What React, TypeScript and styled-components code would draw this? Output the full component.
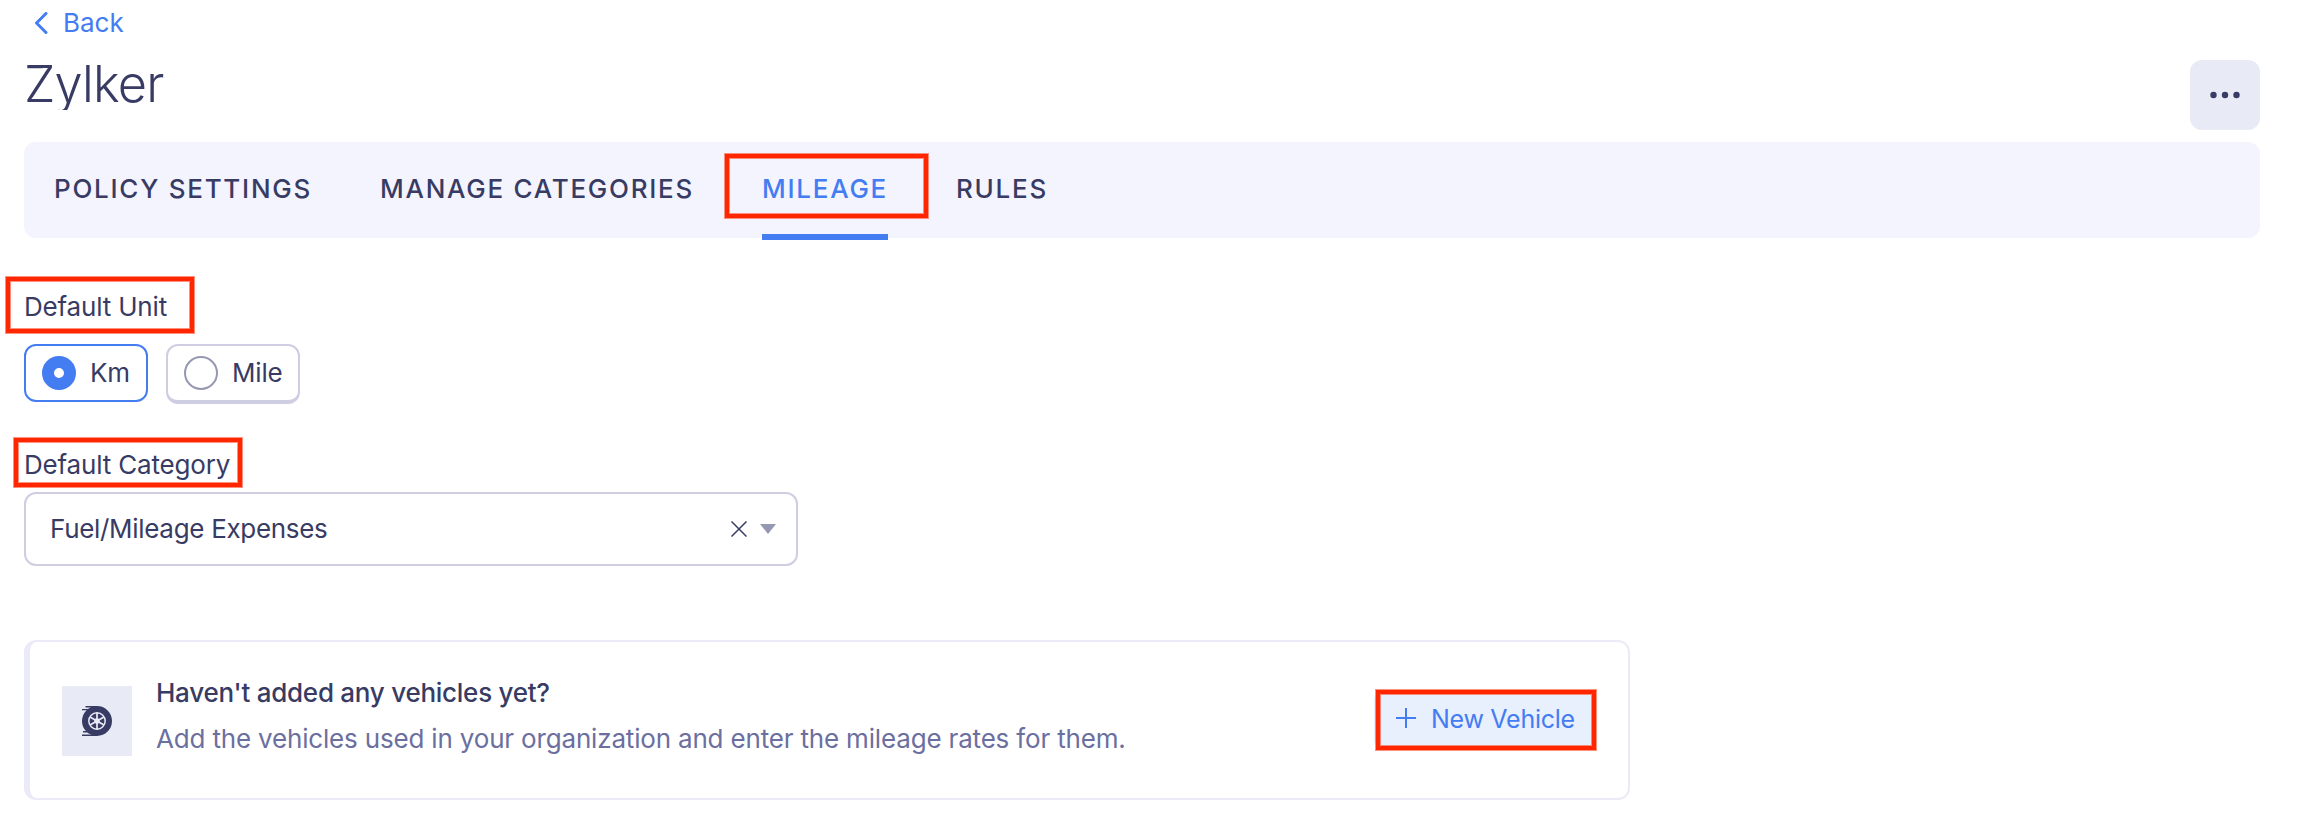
import React from "react";
import styled, { createGlobalStyle, css } from "styled-components";

const GlobalStyle = createGlobalStyle`
  *, *::before, *::after { box-sizing: border-box; }
  body {
    margin: 0;
    background: #fff;
    color: #383b63;
    font-family: Inter, "Liberation Sans", sans-serif;
    font-size: 26px;
    line-height: 32px;
  }
  button { font: inherit; border: 0; margin: 0; padding: 0; background: none; color: inherit; }
`;

const Page = styled.main`
  display: flex;
  flex-direction: column;
  height: 834px;
  padding: 0 38px 0 24px;
  overflow: hidden;
`;

const Header = styled.header`
  display: flex;
  justify-content: space-between;
  align-items: flex-start;
  height: 142px;
`;

const BackLink = styled.a`
  display: flex;
  align-items: center;
  gap: 15px;
  height: 46px;
  padding-left: 10px;
  color: #447cf1;
`;

const Title = styled.h1`
  height: 53px;
  margin: 11px 0 0;
  overflow: hidden;
  font-size: 50.5px;
  font-weight: 330;
  letter-spacing: -0.8px;
  line-height: 53px;
`;

const MoreButton = styled.button`
  display: grid;
  place-items: center;
  width: 70px;
  height: 70px;
  margin-top: 60px;
  border-radius: 12px;
  background: #e8ebf6;
`;

const Highlight = styled.span<{ $inset: string }>`
  position: absolute;
  inset: ${(p) => p.$inset};
  border: 4px solid #ff2600;
  box-shadow: 0 0 0 1px rgba(255, 38, 0, 0.5), inset 0 0 0 1px rgba(255, 38, 0, 0.5);
  pointer-events: none;
`;

const Tabs = styled.nav`
  display: flex;
  gap: 68px;
  flex: none;
  height: 96px;
  padding-left: 30px;
  border-radius: 12px;
  background: #f3f4fd;
`;

const Tab = styled.a<{ $active?: boolean }>`
  position: relative;
  height: 98px;
  font-weight: 500;
  letter-spacing: 1.74px;
  line-height: 93px;
  ${(p) => p.$active && css`
    color: #447cf1;
    border-bottom: 6px solid #447cf1;
  `}
`;

const Label = styled.div`
  position: relative;
  align-self: flex-start;
  height: 32px;
  letter-spacing: -0.18px;
`;

const UnitField = styled.section`
  display: flex;
  flex-direction: column;
  gap: 21px;
  margin-top: 53px;
`;

const RadioRow = styled.div`
  display: flex;
  gap: 18px;
  height: 60px;
  align-items: flex-start;
`;

const Radio = styled.label<{ $checked?: boolean }>`
  display: flex;
  align-items: center;
  gap: 14px;
  height: ${(p) => (p.$checked ? 58 : 60)}px;
  padding: 0 ${(p) => (p.$checked ? 16 : 15)}px 0 16px;
  border: 2px solid ${(p) => (p.$checked ? "#447cf1" : "#cecde2")};
  border-bottom-width: ${(p) => (p.$checked ? 2 : 4)}px;
  border-radius: 12px;
  letter-spacing: -0.16px;
`;

const RadioDot = styled.span<{ $checked?: boolean }>`
  width: 34px;
  height: 34px;
  border-radius: 50%;
  border: ${(p) => (p.$checked ? "12px solid #447cf1" : "2px solid #9698b2")};
`;

const CategoryField = styled.section`
  display: flex;
  flex-direction: column;
  gap: 11px;
  margin-top: 45px;
`;

const Select = styled.div`
  display: flex;
  align-items: center;
  width: 774px;
  height: 74px;
  padding: 0 20px 1px 24px;
  border: 2px solid #cecde2;
  border-radius: 12px;
`;

const SelectValue = styled.span`
  flex: 1;
  letter-spacing: -0.31px;
`;

const SelectIcons = styled.span`
  display: flex;
  align-items: center;
  gap: 13px;
`;

const VehicleCard = styled.section`
  display: flex;
  align-items: center;
  width: 1606px;
  height: 160px;
  margin-top: 74px;
  padding: 2px 32px 0 32px;
  border: 2px solid #ebeaf8;
  border-left-width: 6px;
  border-radius: 12px;
`;

const IconTile = styled.div`
  display: grid;
  place-items: center;
  width: 70px;
  height: 70px;
  margin-right: 24px;
  background: #e8ebf6;
`;

const CardText = styled.div`
  flex: 1;
  margin-top: -11px;
`;

const CardTitle = styled.div`
  font-weight: 500;
  letter-spacing: -0.26px;
  line-height: 46px;
`;

const CardNote = styled.div`
  color: #6b6f9f;
  letter-spacing: -0.175px;
  line-height: 46px;
`;

const NewVehicle = styled.button`
  position: relative;
  display: flex;
  align-items: center;
  gap: 15px;
  width: 222px;
  height: 56px;
  margin-top: -2px;
  padding: 0 0 3px 22px;
  border-radius: 8px;
  background: #e8effd;
  color: #447cf1;
  font-size: 25px;
  letter-spacing: -0.27px;
  white-space: nowrap;
`;

const PlusIcon = styled.svg`
  flex: none;
  margin-top: -1px;
`;

const Wheel = () => (
  <svg width="30" height="30" viewBox="0 0 30 30" fill="none">
    <circle cx="15" cy="15" r="15" fill="#383b63" />
    <path d="M3.5 .7H15M0 3.6h8M1 25.8h8M0 29.2h15" stroke="#383b63" strokeWidth="1.4" />
    <circle cx="15" cy="15" r="8.2" stroke="#e8ebf6" strokeWidth="1.5" />
    <path d="M15 7v16M8 11l14 8M22 11 8 19" stroke="#e8ebf6" strokeWidth="1.7" />
    <circle cx="15" cy="15" r="2.8" fill="#e8ebf6" />
  </svg>
);

export default function App() {
  return (
    <>
      <GlobalStyle />
      <Page>
        <Header>
          <div>
            <BackLink>
              <svg width="14" height="22" viewBox="0 0 14 22" fill="none" stroke="#447cf1" strokeWidth="3" strokeLinecap="round" strokeLinejoin="round">
                <path d="M12 1.5 2.5 11l9.5 9.5" />
              </svg>
              Back
            </BackLink>
            <Title>Zylker</Title>
          </div>
          <MoreButton aria-label="More">
            <svg width="30" height="8" viewBox="0 0 30 8" fill="#383b63">
              <circle cx="3.5" cy="4" r="3.2" />
              <circle cx="15" cy="4" r="3.2" />
              <circle cx="26.5" cy="4" r="3.2" />
            </svg>
          </MoreButton>
        </Header>
        <Tabs>
          <Tab>POLICY SETTINGS</Tab>
          <Tab>MANAGE CATEGORIES</Tab>
          <Tab $active>
            MILEAGE
            <Highlight $inset="12px -40px 16px -37px" />
          </Tab>
          <Tab>RULES</Tab>
        </Tabs>
        <UnitField>
          <Label>
            Default Unit
            <Highlight $inset="-14px -27px -10px -18px" />
          </Label>
          <RadioRow>
            <Radio $checked><RadioDot $checked />Km</Radio>
            <Radio><RadioDot />Mile</Radio>
          </RadioRow>
        </UnitField>
        <CategoryField>
          <Label>
            Default Category
            <Highlight $inset="-11px -12px -6px -10px" />
          </Label>
          <Select>
            <SelectValue>Fuel/Mileage Expenses</SelectValue>
            <SelectIcons>
              <svg width="16" height="16" viewBox="0 0 16 16" stroke="#383b63" strokeWidth="1.5">
                <path d="M.5 .5l15 15M15.5 .5l-15 15" />
              </svg>
              <svg width="16" height="10" viewBox="0 0 16 10" fill="#9698b2">
                <path d="M0 0h16L8 10Z" />
              </svg>
            </SelectIcons>
          </Select>
        </CategoryField>
        <VehicleCard>
          <IconTile><Wheel /></IconTile>
          <CardText>
            <CardTitle>Haven't added any vehicles yet?</CardTitle>
            <CardNote>Add the vehicles used in your organization and enter the mileage rates for them.</CardNote>
          </CardText>
          <NewVehicle>
            <PlusIcon width="20" height="20" viewBox="0 0 20 20" stroke="#447cf1" strokeWidth="2">
              <path d="M10 0v20M0 10h20" />
            </PlusIcon>
            New Vehicle
            <Highlight $inset="-2px 0px -2px 2px" />
          </NewVehicle>
        </VehicleCard>
      </Page>
    </>
  );
}
